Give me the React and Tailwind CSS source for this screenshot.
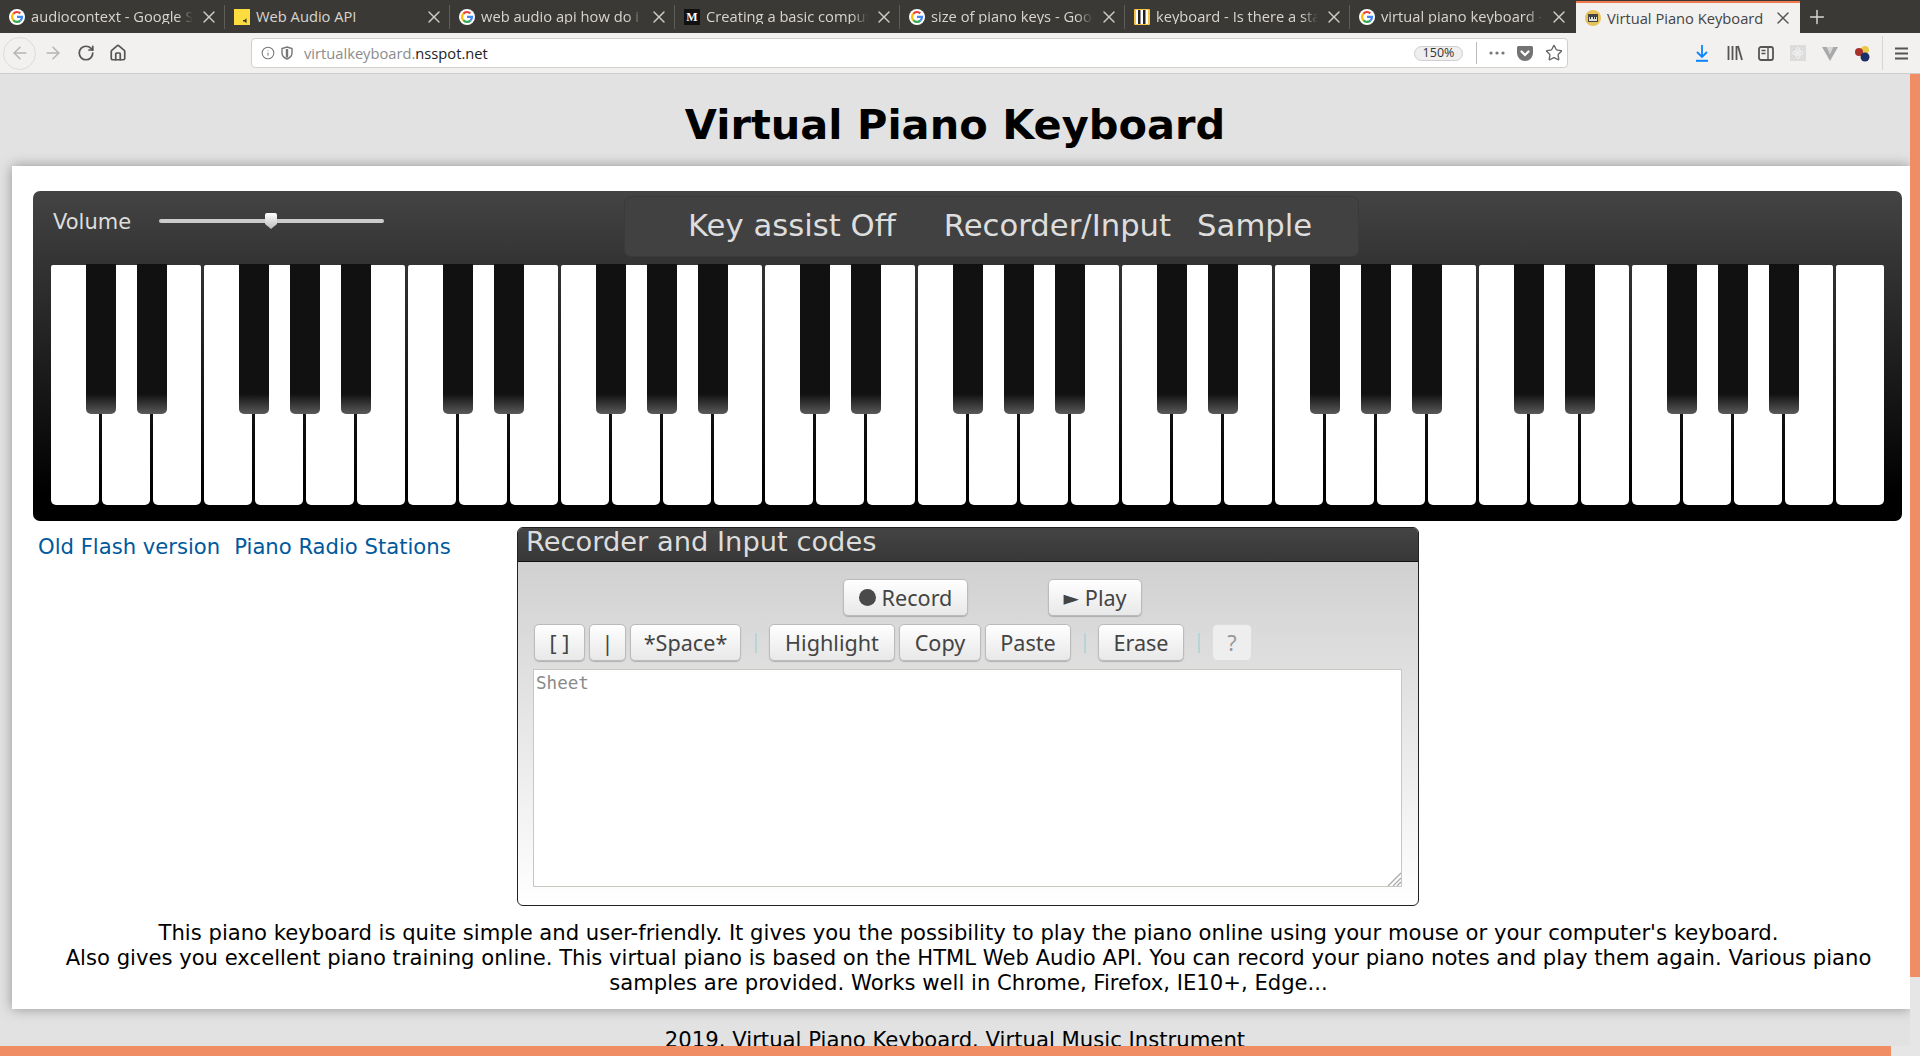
import { RotateCw, Home, ArrowLeft, ArrowRight, Info, Star, X, Plus } from 'lucide-react'

const tabs = [
  { title: 'audiocontext - Google S', icon: 'g' },
  { title: 'Web Audio API', icon: 'js', plain: true },
  { title: 'web audio api how do i r', icon: 'g' },
  { title: 'Creating a basic comput', icon: 'm' },
  { title: 'size of piano keys - Goog', icon: 'g' },
  { title: 'keyboard - Is there a star', icon: 'so' },
  { title: 'virtual piano keyboard -', icon: 'g' },
  { title: 'Virtual Piano Keyboard', icon: 'vp', active: true },
]

const hasBlack = (i) => i < 35 && [0, 1, 3, 4, 5].includes(i % 7)

function GoogleIcon() {
  return (
    <svg width="16" height="16" viewBox="0 0 16 16" className="shrink-0 rounded-full bg-white">
      <path d="M4.4 4.8A4.900 4.900 0 0 1 11.300 4.400" fill="none" stroke="#ea4335" strokeWidth="2.200" />
      <path d="M4.400 4.800A4.900 4.900 0 0 0 4.400 11.200" fill="none" stroke="#fbbc05" strokeWidth="2.200" />
      <path d="M4.400 11.200A4.900 4.900 0 0 0 11.400 11.600" fill="none" stroke="#34a853" strokeWidth="2.200" />
      <path d="M8 7.900h5a5 5 0 0 1-1.600 3.700" fill="none" stroke="#4285f4" strokeWidth="2.200" />
    </svg>
  )
}

function TabIcon({ kind }) {
  if (kind === 'g') return <GoogleIcon />
  if (kind === 'js') {
    return (
      <svg width="16" height="16" viewBox="0 0 16 16" className="shrink-0">
        <rect width="16" height="16" fill="#fddc3f" />
        <path d="M9 11h1.500l2-1.800v5l-2-1.800H9z" fill="#333" />
      </svg>
    )
  }
  if (kind === 'm') {
    return <span className="flex h-4 w-4 shrink-0 items-center justify-center bg-[#111] font-['Liberation_Serif',serif] text-[12px] font-bold text-white">M</span>
  }
  if (kind === 'so') {
    return (
      <svg width="16" height="16" viewBox="0 0 16 16" className="shrink-0">
        <rect width="16" height="16" rx="1" fill="#f6c544" />
        <rect x="2" y="1" width="12" height="14" fill="#fff" />
        <rect x="4" y="1" width="2.500" height="14" fill="#222" />
        <rect x="9" y="1" width="2.500" height="14" fill="#222" />
      </svg>
    )
  }
  return (
    <svg width="16" height="16" viewBox="0 0 16 16" className="shrink-0">
      <circle cx="8" cy="8" r="8" fill="#e6c25a" />
      <rect x="3" y="4" width="10" height="8" fill="#444" />
      <path d="M4 7h8v4H4z" fill="#ddd" />
      <path d="M5 7h1v2H5zM8 7h1v2H8zM10 7h1v2h-1z" fill="#222" />
    </svg>
  )
}

function Tab({ tab, last }) {
  if (tab.active) {
    return (
      <div className="mt-[1px] ml-[1px] flex h-[32px] w-[224px] shrink-0 items-center gap-[6px] border-t-2 border-t-[#f0794f] bg-[#f2f1ef] pl-[9px] pr-[7px] text-[#444]">
        <TabIcon kind={tab.icon} />
        <span className="min-w-0 flex-1 whitespace-nowrap">{tab.title}</span>
        <X size={20} strokeWidth={1.700} className="shrink-0 text-[#555]" />
      </div>
    )
  }
  return (
    <div className="flex h-[33px] w-[225px] shrink-0 items-center gap-[6px] pl-[9px] text-[#d8d5cf]">
      <TabIcon kind={tab.icon} />
      <span className={`min-w-0 flex-1 whitespace-nowrap ${tab.plain ? '' : '[mask-image:linear-gradient(to_left,transparent,black_16px)]'}`}>{tab.title}</span>
      <X size={20} strokeWidth={1.700} className="shrink-0 text-[#cfccc6]" />
      <span className={`ml-[-1px] h-[24px] w-px shrink-0 ${last ? '' : 'bg-[#5f5d58]'}`} />
    </div>
  )
}

function Toolbar() {
  return (
    <div className="flex h-[41px] items-center border-b border-b-[#ccc] bg-[#f2f1ef] text-[#555]">
      <div className="ml-[3px] flex h-[33px] w-[33px] shrink-0 items-center justify-center rounded-full border border-[#dcdbd8] text-[#b4b4b2]"><ArrowLeft size={20} strokeWidth={1.800} /></div>
      <ArrowRight size={20} strokeWidth={1.800} className="ml-[7px] shrink-0 text-[#b4b4b2]" />
      <RotateCw size={18} strokeWidth={2.300} className="ml-[14px] shrink-0" />
      <Home size={18} strokeWidth={2.300} className="ml-[14px] shrink-0" />
      <div className="ml-[124px] flex h-[30px] w-[1317px] shrink-0 items-center rounded-[4px] border border-[#d0cfcc] bg-white pl-[9px] pr-[4px]">
        <Info size={14} strokeWidth={1.800} className="shrink-0 text-[#777]" />
        <svg width="12" height="14" viewBox="0 0 12 14" className="ml-[6px] shrink-0"><path d="M6 1l5 1.500V7c0 3-2.500 5-5 6-2.500-1-5-3-5-6V2.500z" fill="none" stroke="#777" strokeWidth="1.400" /><path d="M6 3v8.500" stroke="#777" strokeWidth="2.400" /></svg>
        <span className="ml-[11px] text-[#8c8c8c]">virtualkeyboard.<span className="text-[#222]">nsspot.net</span></span>
        <span className="ml-auto flex h-[15px] w-[49px] items-center justify-center rounded-full border border-[#cfcfcf] bg-[#efefef] text-[12.500px] text-[#333]">150%</span>
        <span className="ml-[13px] h-[22px] w-px bg-[#bbb]" />
        <svg width="16" height="16" viewBox="0 0 16 16" className="ml-[12px]"><circle cx="2" cy="8" r="1.600" fill="#777" /><circle cx="8" cy="8" r="1.600" fill="#777" /><circle cx="14" cy="8" r="1.600" fill="#777" /></svg>
        <svg width="16" height="15" viewBox="0 0 16 15" className="ml-[12px]"><path d="M1.500 0h13A1.500 1.500 0 0 1 16 1.500V7A8 8 0 0 1 0 7V1.500A1.500 1.500 0 0 1 1.500 0z" fill="#737373" /><path d="M4.500 5.500L8 9l3.500-3.500" fill="none" stroke="#fff" strokeWidth="2.200" strokeLinecap="round" /></svg>
        <Star size={18} strokeWidth={1.800} className="ml-[12px] shrink-0 text-[#666]" />
      </div>
      <svg width="14" height="17" viewBox="0 0 14 17" className="ml-[127px] shrink-0"><path d="M7 0v12M2 7l5 5 5-5" fill="none" stroke="#0a84ff" strokeWidth="1.800" /><path d="M1 15.800h12" stroke="#0a84ff" strokeWidth="2" /></svg>
      <svg width="16" height="16" viewBox="0 0 16 16" className="ml-[18px] shrink-0"><path d="M1.500 1v14M5.500 1v14M9.500 1v14M11 1l4 14" fill="none" stroke="#555" strokeWidth="1.800" /></svg>
      <svg width="16" height="15" viewBox="0 0 16 15" className="ml-[15px] shrink-0"><rect x="1" y="1" width="14" height="13" rx="2" fill="none" stroke="#555" strokeWidth="1.800" /><path d="M10 1v13M3.500 4.500h4M3.500 7.500h4" stroke="#555" strokeWidth="1.400" /></svg>
      <svg width="16" height="16" viewBox="0 0 16 16" className="ml-[16px] shrink-0"><rect width="16" height="16" fill="#dcdcdc" /><ellipse cx="8" cy="8" rx="5.500" ry="2.200" fill="none" stroke="#f4f4f4" /><ellipse cx="8" cy="8" rx="2.200" ry="5.500" fill="none" stroke="#f4f4f4" /><circle cx="8" cy="8" r="1.300" fill="#f4f4f4" /></svg>
      <svg width="16" height="15" viewBox="0 0 16 15" className="ml-[16px] shrink-0"><path d="M0 1h5l3 7 3-7h5L8 15z" fill="#a9a9a9" /><path d="M5 1l3 7 3-7z" fill="#d6d6d6" /></svg>
      <svg width="17" height="17" viewBox="0 0 17 17" className="ml-[16px] shrink-0"><circle cx="11" cy="5" r="4" fill="#e8c94a" /><circle cx="5" cy="7" r="4" fill="#a8322a" /><circle cx="11" cy="12" r="4.500" fill="#1d2f66" /></svg>
      <span className="ml-[11px] h-[34px] w-px shrink-0 bg-[#d6d5d2]" />
      <svg width="13" height="13" viewBox="0 0 13 13" className="ml-[12px] shrink-0"><path d="M0 1.500h13M0 6.500h13M0 11.500h13" stroke="#555" strokeWidth="1.800" /></svg>
    </div>
  )
}

function Browser() {
  return (
    <div className="font-['Open_Sans',sans-serif] text-[14.700px] leading-none">
      <div className="flex h-[33px] items-start bg-[#3b3935]">
        {tabs.map((t, i) => <Tab key={t.title} tab={t} last={i === 6} />)}
        <div className="flex h-[33px] w-[34px] items-center justify-center text-[#d8d7d3]"><Plus size={22} strokeWidth={1.600} /></div>
      </div>
      <Toolbar />
    </div>
  )
}

function Piano() {
  return (
    <div className="flex gap-[3px] pl-[18px]">
      {Array.from({ length: 36 }, (_, i) => (
        <div key={i} className="relative h-[240px] w-[48px] rounded-b-[5px] rounded-t-[2px] bg-white">
          {hasBlack(i) && (
            <div className="absolute left-[35px] top-[-1px] z-10 h-[150px] w-[30px] rounded-b-[5px] bg-[linear-gradient(to_bottom,#111_0,#111_130px,#5a5a5a_150px)]" />
          )}
        </div>
      ))}
    </div>
  )
}

function Btn({ children, className = '' }) {
  return (
    <button className={`flex h-[37px] shrink-0 items-center justify-center rounded-[5px] border border-[#bbb] bg-[linear-gradient(to_bottom,#fff,#e8e8e8)] font-['Noto_Sans',sans-serif] text-[21.600px] leading-none text-[#444] shadow-[0_1px_1px_rgba(0,0,0,0.2)] ${className}`}>
      {children}
    </button>
  )
}

const Sep = ({ className = 'ml-[14px]' }) => <span className={`mr-[12px] h-[20px] w-[2px] shrink-0 bg-[#b7d5d5] ${className}`} />

function Recorder() {
  return (
    <div className="h-[379px] w-[902px] overflow-hidden rounded-[6px] border border-[#222] bg-[linear-gradient(to_bottom,#ccc,#fff)]">
      <div className="h-[34px] border-b border-b-[#111] bg-[linear-gradient(to_bottom,#444,#383838)] pl-[8px] text-[27.300px] leading-[28px] text-[#ddd]">Recorder and Input codes</div>
      <div className="mt-[17px] flex pl-[325px]">
        <Btn className="w-[125px] gap-[6px]"><span className="h-[17px] w-[17px] rounded-full bg-[#4a4a4a]" />Record</Btn>
        <Btn className="ml-[80px] w-[94px] gap-[6px]"><span className="font-['DejaVu_Sans',sans-serif] text-[20px]">►</span>Play</Btn>
      </div>
      <div className="mt-[8px] flex items-center pl-[16px]">
        <Btn className="w-[51px]">[ ]</Btn>
        <Btn className="ml-[4px] w-[37px]">|</Btn>
        <Btn className="ml-[4px] w-[111px]">*Space*</Btn>
        <Sep />
        <Btn className="w-[126px]">Highlight</Btn>
        <Btn className="ml-[4px] w-[82px]">Copy</Btn>
        <Btn className="ml-[4px] w-[86px]">Paste</Btn>
        <Sep className="ml-[13px]" />
        <Btn className="w-[86px]">Erase</Btn>
        <Sep />
        <Btn className="w-[40px] border-[#ddd] bg-none bg-[#eee] text-[#999] shadow-none">?</Btn>
      </div>
      <div className="relative ml-[15px] mt-[8px] h-[218px] w-[869px] border border-[#c8c8c0] bg-white pl-[2px] pt-[2px] font-['DejaVu_Sans_Mono',monospace] text-[17.600px] leading-[22px] text-[#8a8a8a]">
        Sheet
        <svg width="14" height="14" viewBox="0 0 14 14" className="absolute bottom-0 right-0"><path d="M14 1L1 14M14 6L6 14M14 10L10 14" stroke="#aaa" strokeWidth="1.300" /></svg>
      </div>
    </div>
  )
}

function VolumeThumb() {
  return (
    <svg width="12" height="16" viewBox="0 0 12 16" className="absolute left-[106px] top-[-6px]">
      <defs>
        <linearGradient id="thumb" x1="0" y1="0" x2="0" y2="1">
          <stop offset="0" stopColor="#fff" />
          <stop offset="1" stopColor="#bbb" />
        </linearGradient>
      </defs>
      <path d="M2 0h8a2 2 0 0 1 2 2v9l-6 5-6-5V2a2 2 0 0 1 2-2z" fill="url(#thumb)" />
    </svg>
  )
}

export default function App() {
  return (
    <div className="relative h-[1056px] overflow-hidden bg-[#e2e2e2] font-['DejaVu_Sans',sans-serif]">
      <Browser />
      <div className="pr-[10px]">
        <h1 className="h-[92px] pt-[23px] text-center text-[41.500px] font-bold leading-[56px] text-black">Virtual Piano Keyboard</h1>
        <main className="ml-[12px] h-[843px] bg-white shadow-[0_0_12px_rgba(0,0,0,0.35)]">
          <div className="pt-[25px]">
            <div className="ml-[21px] mr-[8px] h-[330px] rounded-[7px] bg-[linear-gradient(to_bottom,#444_0,#333_73px,#000_302px)]">
              <div className="flex h-[74px]">
                <span className="ml-[20px] mt-[18px] w-[106px] shrink-0 text-[21px] leading-[26px] text-[#ddd]">Volume</span>
                <div className="relative mt-[28px] h-[4px] w-[225px] shrink-0 rounded-full bg-[#ccc]">
                  <VolumeThumb />
                </div>
                <div className="ml-[240px] mt-[5px] flex h-[61px] w-[735px] shrink-0 items-center rounded-[7px] border border-[#3a3a3a] bg-[#414141] pl-[63px] text-[30.700px] text-[#ddd]">
                  <span>Key assist Off</span>
                  <span className="ml-[48px]">Recorder/Input</span>
                  <span className="ml-[26px]">Sample</span>
                </div>
              </div>
              <Piano />
            </div>
          </div>
          <div className="mt-[6px] flex">
            <div className="ml-[26px] w-[479px] pt-[7px] text-[21.150px] leading-[26px] text-[#00599c]">
              <a>Old Flash version</a><a className="ml-[14px]">Piano Radio Stations</a>
            </div>
            <Recorder />
          </div>
          <p className="mt-[14px] pl-[48px] pr-[33px] text-center text-[21.150px] leading-[25px] text-black">
            This piano keyboard is quite simple and user-friendly. It gives you the possibility to play the piano online using your mouse or your computer's keyboard.<br />
            Also gives you excellent piano training online. This virtual piano is based on the HTML Web Audio API. You can record your piano notes and play them again. Various piano samples are provided. Works well in Chrome, Firefox, IE10+, Edge...
          </p>
        </main>
        <p className="mt-[18px] text-center text-[21.200px] leading-[25px] text-black">2019. Virtual Piano Keyboard. Virtual Music Instrument</p>
      </div>
      {/* page scrollbars */}
      <div className="absolute right-0 top-[74px] h-[982px] w-[10px] bg-[#e6e6e6]">
        <div className="h-[903px] bg-[#f08d65]" />
      </div>
      <div className="absolute bottom-0 left-0 h-[10px] w-[1910px] bg-[#e6e6e6]">
        <div className="h-[10px] w-[1891px] bg-[#f08d65]" />
      </div>
    </div>
  )
}
